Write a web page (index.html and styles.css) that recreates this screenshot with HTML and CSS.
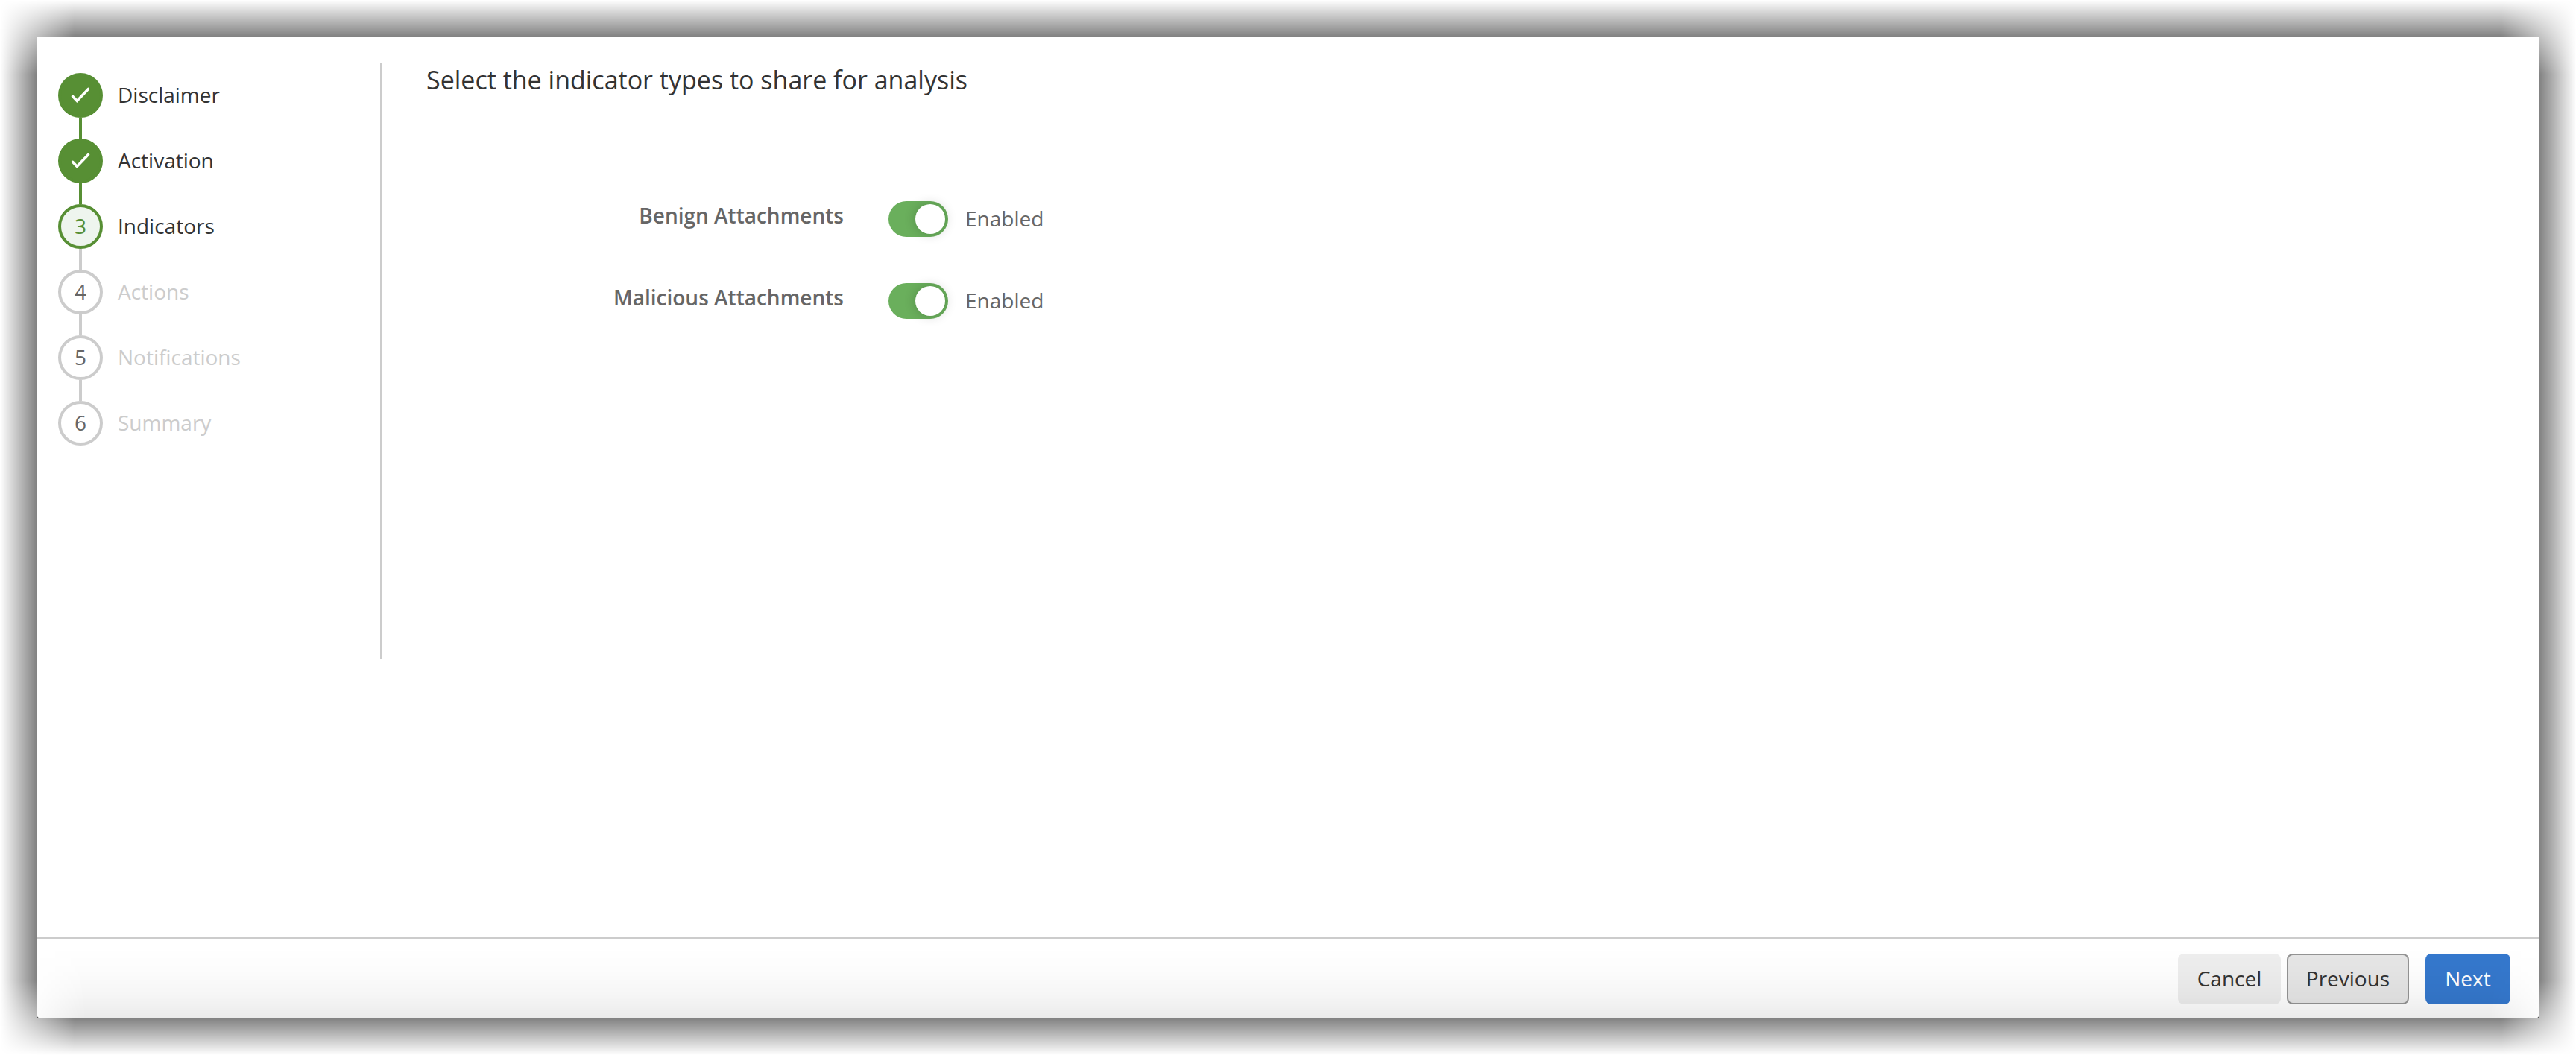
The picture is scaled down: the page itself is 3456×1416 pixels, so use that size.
FILE: index.html
```html
<!DOCTYPE html>
<html>

<head>
    <meta charset="utf-8">
    <title>Indicators</title>
    <link rel="stylesheet" href="styles.css">
</head>

<body>
    <div class="shadow"></div>
    <div class="dialog">
        <div class="content">
            <ul class="steps">
                <li class="done">
                    <span class="circle"><svg width="28" height="24" viewBox="0 0 28 24"><path d="M3.5 13.3 L9.3 19.5 L24.5 3.5"/></svg></span>
                    <span class="name">Disclaimer</span>
                </li>
                <li class="done">
                    <span class="circle"><svg width="28" height="24" viewBox="0 0 28 24"><path d="M3.5 13.3 L9.3 19.5 L24.5 3.5"/></svg></span>
                    <span class="name">Activation</span>
                </li>
                <li class="active"><span class="circle">3</span><span class="name">Indicators</span></li>
                <li><span class="circle">4</span><span class="name">Actions</span></li>
                <li><span class="circle">5</span><span class="name">Notifications</span></li>
                <li><span class="circle">6</span><span class="name">Summary</span></li>
            </ul>
            <div class="main">
                <h1>Select the indicator types to share for analysis</h1>
                <div class="row">
                    <label for="benign">Benign Attachments</label>
                    <button class="toggle" id="benign"><span class="knob"></span></button>
                    <span class="state">Enabled</span>
                </div>
                <div class="row">
                    <label for="malicious">Malicious Attachments</label>
                    <button class="toggle" id="malicious"><span class="knob"></span></button>
                    <span class="state">Enabled</span>
                </div>
            </div>
        </div>
        <div class="footer">
            <button class="btn cancel">Cancel</button>
            <button class="btn previous">Previous</button>
            <button class="btn next">Next</button>
        </div>
    </div>
</body>

</html>
```

FILE: styles.css
```css
* {
    box-sizing: border-box;
}

body {
    margin: 0;
    padding: 50px;
    height: 1416px;
    position: relative;
    background: #fff;
    color: #333;
    font-family: "Open Sans", sans-serif;
    font-size: 28px;
}

/* shadow around the dialog */
.shadow {
    position: absolute;
    inset: 0;
    background: #000;
    mask-image: linear-gradient(to right, transparent, #000 100px, #000 calc(100% - 100px), transparent),
        linear-gradient(transparent, #000 100px, #000 calc(100% - 100px), transparent);
    mask-composite: intersect;
}

.dialog {
    position: relative;
    height: 1316px;
    display: flex;
    flex-direction: column;
    background: #000;
}

.content {
    flex: 1;
    display: flex;
    align-items: flex-start;
    padding-top: 34px;
    background: #fff;
}

.steps {
    width: 462px;
    height: 800px;
    margin: 0;
    padding: 14px 0 0 28px;
    list-style: none;
    border-right: 2px solid #ccc;
}

.steps li {
    position: relative;
    display: flex;
    align-items: center;
    height: 60px;
    margin-bottom: 28px;
    color: #ccc;
}

/* line to the next step */
.steps li:not(:last-child)::after {
    content: "";
    position: absolute;
    left: 28px;
    top: 60px;
    width: 4px;
    height: 28px;
    background: #ccc;
}

.steps li.done::after {
    background: #578f34 !important;
}

.steps li.done,
.steps li.active {
    color: #333;
}

.name,
.state {
    padding-bottom: 2px;
}

.circle {
    display: flex;
    align-items: center;
    justify-content: center;
    width: 60px;
    height: 60px;
    margin-right: 20px;
    padding-bottom: 2px;
    border: 4px solid #ccc;
    border-radius: 50%;
    color: #666;
}

.done .circle {
    background: #578f34;
    border-color: #578f34;
}

.active .circle {
    background: #eef5ee;
    border-color: #578f34;
    color: #578f34;
}

.circle svg {
    margin-top: 2px;
    fill: none;
    stroke: #fff;
    stroke-width: 3.6;
    stroke-linecap: round;
}

.main {
    padding-left: 60px;
}

h1 {
    margin: 0 0 140px;
    font-size: 34px;
    font-weight: 400;
    line-height: 46px;
}

.row {
    display: flex;
    align-items: center;
    height: 48px;
    margin-bottom: 62px;
    color: #666;
}

.row label {
    width: 560px;
    margin-right: 60px;
    padding-bottom: 10px;
    text-align: right;
    font-weight: 600;
}

.toggle {
    display: flex;
    justify-content: flex-end;
    width: 80px;
    height: 48px;
    margin-right: 23px;
    padding: 4px;
    border: none;
    border-radius: 24px;
    background: #6aaf5c;
}

.knob {
    width: 40px;
    height: 40px;
    border-radius: 50%;
    background: #fff;
    box-shadow: 0 0 16px rgba(0, 0, 0, 0.2);
}

.footer {
    position: relative;
    display: flex;
    height: 108px;
    padding: 20px 38px 0 0;
    justify-content: flex-end;
    border-top: 2px solid #ccc;
    border-radius: 0 0 2px 2px;
    background: #fff;
}

.footer::after {
    content: "";
    position: absolute;
    inset: 0;
    background: linear-gradient(rgba(0, 0, 0, 0) 10%, rgba(0, 0, 0, 0.012) 40%, rgba(0, 0, 0, 0.035) 70%, rgba(0, 0, 0, 0.08));
    mask-image: linear-gradient(to right, rgba(0, 0, 0, 0.2), #000 65px, #000 calc(100% - 65px), rgba(0, 0, 0, 0.2));
    pointer-events: none;
}

.btn {
    height: 68px;
    padding: 0 0 2px;
    border: none;
    border-radius: 8px;
    font: inherit;
    color: #333;
}

.cancel {
    width: 138px;
    margin-right: 8px;
    background: #eee;
}

.previous {
    width: 164px;
    margin-right: 22px;
    background: #e6e6e6;
    border: 2px solid #949494;
}

.next {
    width: 114px;
    background: #3578cd;
    color: #fff;
}
```
